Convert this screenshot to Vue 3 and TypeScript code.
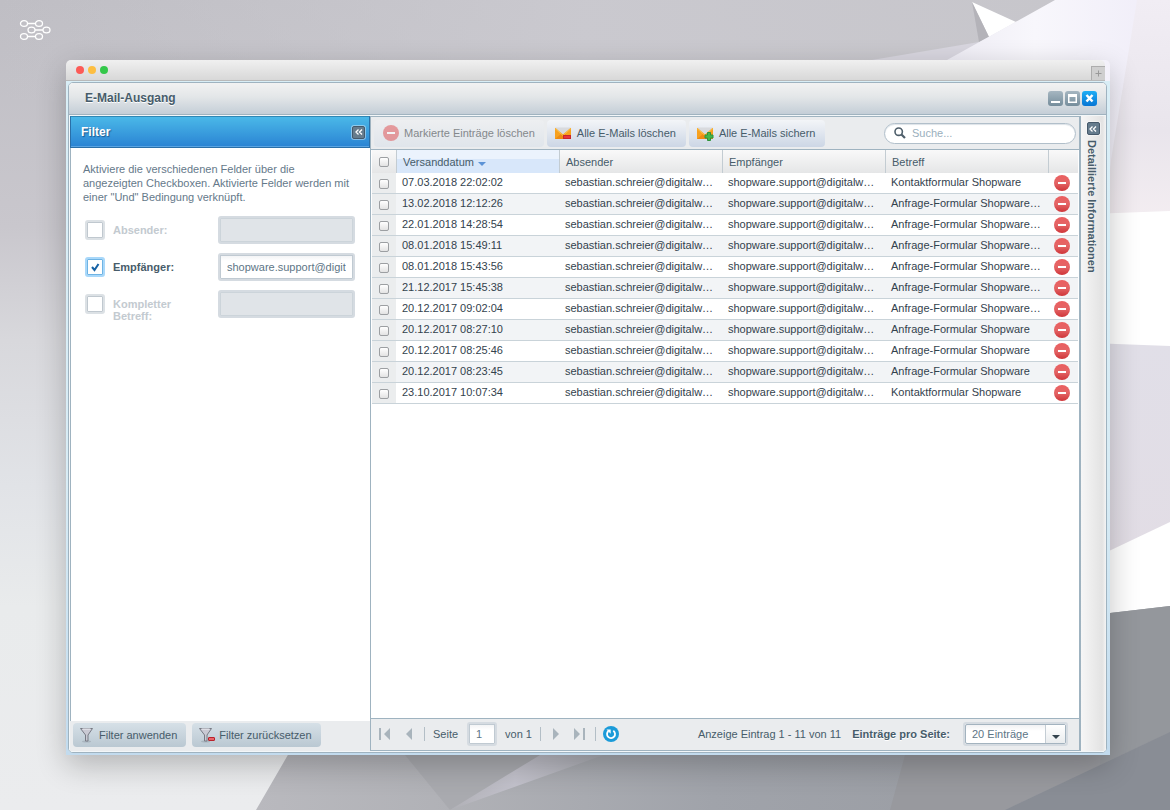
<script setup lang="ts">
import { computed, ref } from 'vue'

interface Mail {
  date: string
  subject: string
  selected: boolean
}

interface FilterField {
  id: string
  label: string
  active: boolean
  value: string
}

const sender = 'sebastian.schreier@digitalw…'
const recipient = 'shopware.support@digitalw…'

const mails = ref<Mail[]>([
  { date: '07.03.2018 22:02:02', subject: 'Kontaktformular Shopware', selected: false },
  { date: '13.02.2018 12:12:26', subject: 'Anfrage-Formular Shopware…', selected: false },
  { date: '22.01.2018 14:28:54', subject: 'Anfrage-Formular Shopware…', selected: false },
  { date: '08.01.2018 15:49:11', subject: 'Anfrage-Formular Shopware…', selected: false },
  { date: '08.01.2018 15:43:56', subject: 'Anfrage-Formular Shopware…', selected: false },
  { date: '21.12.2017 15:45:38', subject: 'Anfrage-Formular Shopware…', selected: false },
  { date: '20.12.2017 09:02:04', subject: 'Anfrage-Formular Shopware…', selected: false },
  { date: '20.12.2017 08:27:10', subject: 'Anfrage-Formular Shopware', selected: false },
  { date: '20.12.2017 08:25:46', subject: 'Anfrage-Formular Shopware', selected: false },
  { date: '20.12.2017 08:23:45', subject: 'Anfrage-Formular Shopware', selected: false },
  { date: '23.10.2017 10:07:34', subject: 'Kontaktformular Shopware', selected: false },
])

const filters = ref<FilterField[]>([
  { id: 'absender', label: 'Absender:', active: false, value: '' },
  { id: 'empfaenger', label: 'Empfänger:', active: true, value: 'shopware.support@digit' },
  { id: 'betreff', label: 'Kompletter Betreff:', active: false, value: '' },
])

const search = ref('')
const page = ref('1')
const perPage = ref('20')
const noneSelected = computed(() => !mails.value.some((m) => m.selected))
const allSelected = computed({
  get: () => mails.value.length > 0 && mails.value.every((m) => m.selected),
  set: (on: boolean) => mails.value.forEach((m) => (m.selected = on)),
})

function removeMail(index: number) {
  mails.value.splice(index, 1)
}

function resetFilters() {
  filters.value.forEach((f) => {
    f.active = false
    f.value = ''
  })
}
</script>

<template>
  <div class="desktop">
    <svg class="wallpaper" viewBox="0 0 1170 810" preserveAspectRatio="xMidYMid slice" aria-hidden="true">
      <defs>
        <linearGradient id="wp-base" x1="0" y1="0" x2="0" y2="1">
          <stop offset="0" stop-color="#bfbec4" />
          <stop offset="0.28" stop-color="#c9c7cd" />
          <stop offset="0.42" stop-color="#d8d8dc" />
          <stop offset="0.6" stop-color="#e1e3e7" />
          <stop offset="0.75" stop-color="#e9ebec" />
          <stop offset="1" stop-color="#ebecee" />
        </linearGradient>
        <linearGradient id="wp-glow" x1="0" y1="0" x2="1" y2="0">
          <stop offset="0" stop-color="#cbcad0" stop-opacity="0" />
          <stop offset="0.5" stop-color="#cbcad0" stop-opacity="0.9" />
          <stop offset="1" stop-color="#c7c6cb" stop-opacity="0.9" />
        </linearGradient>
        <linearGradient id="wp-sheet" x1="0" y1="0" x2="1" y2="0">
          <stop offset="0" stop-color="#e9e7f1" />
          <stop offset="0.5" stop-color="#f8f7fc" />
          <stop offset="1" stop-color="#efecf8" />
        </linearGradient>
        <linearGradient id="wp-fold" x1="0" y1="0" x2="0" y2="1">
          <stop offset="0" stop-color="#f1edf4" />
          <stop offset="0.6" stop-color="#e9e5ec" />
          <stop offset="1" stop-color="#f3edf1" />
        </linearGradient>
        <linearGradient id="wp-lilac" x1="0" y1="0" x2="0" y2="1">
          <stop offset="0" stop-color="#e1dfe8" />
          <stop offset="1" stop-color="#e2dde5" />
        </linearGradient>
        <linearGradient id="wp-floor" x1="0" y1="0" x2="1" y2="0">
          <stop offset="0" stop-color="#b9b9be" />
          <stop offset="0.22" stop-color="#b0b1b6" />
          <stop offset="0.5" stop-color="#a0a3aa" />
          <stop offset="1" stop-color="#979aa0" />
        </linearGradient>
        <linearGradient id="wp-streak" x1="0" y1="0" x2="1" y2="0">
          <stop offset="0" stop-color="#b0b0b6" />
          <stop offset="0.4" stop-color="#c3c2cc" />
          <stop offset="1" stop-color="#a8aab0" />
        </linearGradient>
      </defs>
      <rect width="1170" height="810" fill="url(#wp-base)" />
      <rect width="1170" height="100" fill="url(#wp-glow)" />
      <polygon points="860,62 979,42 1016,22 1040,90 860,90" fill="#d8d6df" />
      <polygon points="972,2 1016,22 989,37" fill="#fff" />
      <polygon points="972,2 989,37 979,42" fill="#b4b3b9" />
      <polygon points="1055,0 1170,0 1170,230 900,230 900,86 947,60" fill="url(#wp-sheet)" />
      <polygon points="1137,0 1170,0 1170,211 1105,218 1111,160" fill="url(#wp-fold)" />
      <polygon points="1090,214 1170,211 1170,620 1090,620" fill="#fff" />
      <polygon points="1090,343 1170,346 1170,522 1090,560" fill="url(#wp-lilac)" />
      <polygon points="340,665 1110,613 1170,606 1170,810 256,810" fill="url(#wp-floor)" />
      <polygon points="405,755 450,810 545,755 545,700 400,700" fill="#a9aaaf" />
      <polygon points="450,810 545,752 612,752" fill="url(#wp-streak)" />
      <polygon points="905,755 890,810 1005,810 1170,732 1170,690 905,690" fill="#98999e" />
      <polygon points="1110,613 1170,606 1170,732 1100,765" fill="#94979c" />
      <polygon points="1005,810 1170,732 1170,810" fill="#898d95" />
    </svg>

    <a class="logo" href="#" aria-label="Startseite">
      <svg width="32" height="22" viewBox="0 0 32 22" fill="none" stroke="#fff" stroke-width="1.300">
        <ellipse cx="5" cy="4.500" rx="3.500" ry="2.900" />
        <ellipse cx="20" cy="4.500" rx="3.500" ry="2.900" />
        <ellipse cx="12.500" cy="11" rx="3.500" ry="2.900" />
        <ellipse cx="27.500" cy="11" rx="3.500" ry="2.900" />
        <ellipse cx="5" cy="17.500" rx="3.500" ry="2.900" />
        <ellipse cx="20" cy="17.500" rx="3.500" ry="2.900" />
        <path d="M8.500 4.500h8M16 11h8M8.500 17.500h8" />
      </svg>
    </a>

    <div class="browser">
      <header class="tabbar">
        <i class="dot red"></i><i class="dot amber"></i><i class="dot green"></i>
        <button class="newtab" type="button" aria-label="Neuer Tab">
          <svg width="7" height="7" viewBox="0 0 7 7"><path d="M3.500 0.500v6M0.500 3.500h6" stroke="#999" /></svg>
        </button>
      </header>

      <div class="frame">
        <section class="window">
          <div class="titlebar">
            <h1>E-Mail-Ausgang</h1>
            <button class="ctl" type="button" aria-label="Minimieren">
              <svg viewBox="0 0 15 15"><path d="M3 10h9v2H3z" fill="#fff" /></svg>
            </button>
            <button class="ctl" type="button" aria-label="Maximieren">
              <svg viewBox="0 0 15 15"><path d="M3 3h9v9H3zM4.500 6v4.500h6V6z" fill="#fff" fill-rule="evenodd" /></svg>
            </button>
            <button class="ctl close" type="button" aria-label="Schließen">
              <svg viewBox="0 0 15 15"><path d="M4.500 4l6 6.500M10.500 4l-6 6.500" stroke="#fff" stroke-width="2.500" /></svg>
            </button>
          </div>

          <div class="body">
            <aside class="filter">
              <div class="filter-head">
                <h2>Filter</h2>
                <button class="collapse" type="button" aria-label="Filter einklappen">
                  <svg width="8" height="6" viewBox="0 0 8 6"><path d="M3.500 0.500L1 3l2.500 2.500M7 0.500L4.500 3 7 5.500" /></svg>
                </button>
              </div>
              <div class="filter-body">
                <p>Aktiviere die verschiedenen Felder über die angezeigten Checkboxen. Aktivierte Felder werden mit einer "Und" Bedingung verknüpft.</p>
                <div v-for="f in filters" :key="f.id" class="field" :class="{ off: !f.active }">
                  <input :id="'on-' + f.id" v-model="f.active" class="bigcheck" type="checkbox" />
                  <label :for="'on-' + f.id">{{ f.label }}</label>
                  <input v-model="f.value" class="text" type="text" :aria-label="f.label" :disabled="!f.active" />
                </div>
              </div>
              <div class="filter-foot">
                <button class="btn" type="button">
                  <svg width="14" height="16" viewBox="0 0 14 16">
                    <ellipse cx="6.500" cy="14.500" rx="4.500" ry="1" fill="#a9b5bf" />
                    <path d="M0.500 1.500h12L8 8v6H5.500V8z" fill="#c9c9d3" stroke="#777a84" />
                    <path d="M2.500 2h8" stroke="#f1f1f6" />
                  </svg>
                  Filter anwenden
                </button>
                <button class="btn" type="button" @click="resetFilters">
                  <svg width="16" height="16" viewBox="0 0 16 16">
                    <ellipse cx="6.500" cy="14.500" rx="4.500" ry="1" fill="#a9b5bf" />
                    <path d="M0.500 1.500h12L8 8v6H5.500V8z" fill="#c9c9d3" stroke="#777a84" />
                    <path d="M2.500 2h8" stroke="#f1f1f6" />
                    <rect x="9.500" y="10.500" width="6" height="3" rx="0.500" fill="#e8656a" stroke="#b8222c" />
                  </svg>
                  Filter zurücksetzen
                </button>
              </div>
            </aside>

            <main class="grid">
              <div class="toolbar">
                <button class="tool" type="button" :disabled="noneSelected">
                  <svg class="minus" viewBox="0 0 16 16"><circle cx="8" cy="8" r="8" fill="#e0494b" /><path d="M4 7h8v2H4z" fill="#fff" /></svg>
                  Markierte Einträge löschen
                </button>
                <button class="tool" type="button">
                  <svg width="17" height="16" viewBox="0 0 17 16">
                    <path d="M0 3h16v11H0z" fill="#f7a11f" />
                    <path d="M0 14l6-5h4l6 5z" fill="#ee8a12" />
                    <path d="M0 2.500h16L8 9.500z" fill="#d8dade" />
                    <path d="M0 3.500l8 7 8-7" fill="none" stroke="#fbbf45" />
                    <rect x="8.500" y="10.500" width="7" height="3" fill="#e8343a" stroke="#c9262c" />
                  </svg>
                  Alle E-Mails löschen
                </button>
                <button class="tool" type="button">
                  <svg width="17" height="16" viewBox="0 0 17 16">
                    <path d="M0 3h16v11H0z" fill="#f7a11f" />
                    <path d="M0 14l6-5h4l6 5z" fill="#ee8a12" />
                    <path d="M0 2.500h16L8 9.500z" fill="#d8dade" />
                    <path d="M0 3.500l8 7 8-7" fill="none" stroke="#fbbf45" />
                    <path d="M10.500 7.500h3v2.500h2.500v3h-2.500v2.500h-3V13H8v-3h2.500z" fill="#45b649" stroke="#2f9238" />
                  </svg>
                  Alle E-Mails sichern
                </button>
                <label class="search">
                  <svg width="12" height="12" viewBox="0 0 12 12" fill="none" stroke="#4f5f6b">
                    <circle cx="4.700" cy="4.700" r="3.700" stroke-width="1.600" />
                    <path d="M7.500 7.500l3.500 3.500" stroke-width="2.200" />
                  </svg>
                  <input v-model="search" type="text" placeholder="Suche..." aria-label="Suche" />
                </label>
              </div>

              <div class="table-area">
                <table>
                  <colgroup>
                    <col class="c-check" /><col /><col /><col /><col /><col class="c-act" />
                  </colgroup>
                  <thead>
                    <tr>
                      <th class="first"><input v-model="allSelected" class="check" type="checkbox" aria-label="Alle auswählen" /></th>
                      <th class="sorted">Versanddatum <i class="caret"></i></th>
                      <th>Absender</th>
                      <th>Empfänger</th>
                      <th>Betreff</th>
                      <th></th>
                    </tr>
                  </thead>
                  <tbody>
                    <tr v-for="(m, i) in mails" :key="m.date">
                      <td class="first"><input v-model="m.selected" class="check" type="checkbox" :aria-label="m.date" /></td>
                      <td>{{ m.date }}</td>
                      <td>{{ sender }}</td>
                      <td>{{ recipient }}</td>
                      <td>{{ m.subject }}</td>
                      <td class="act">
                        <button type="button" aria-label="Löschen" @click="removeMail(i)">
                          <svg class="minus" viewBox="0 0 16 16">
                            <defs>
                              <linearGradient :id="'del-' + i" x1="0" y1="0" x2="0" y2="1">
                                <stop offset="0" stop-color="#ea5f60" /><stop offset="0.500" stop-color="#e46566" /><stop offset="1" stop-color="#cf3539" />
                              </linearGradient>
                            </defs>
                            <circle cx="8" cy="8" r="8" :fill="`url(#del-${i})`" />
                            <path d="M4 7h8v2H4z" fill="#fff" />
                          </svg>
                        </button>
                      </td>
                    </tr>
                  </tbody>
                </table>
              </div>

              <footer class="pager">
                <button class="nav" type="button" aria-label="Erste Seite" disabled>
                  <svg width="12" height="12" viewBox="0 0 12 12"><path d="M0 0h2v12H0zM11 0v12L5 6z" /></svg>
                </button>
                <button class="nav prev" type="button" aria-label="Vorherige Seite" disabled>
                  <svg width="6" height="12" viewBox="0 0 6 12"><path d="M6 0v12L0 6z" /></svg>
                </button>
                <i class="sep"></i>
                <label for="page-no">Seite</label>
                <input id="page-no" v-model="page" class="text pageno" type="text" />
                <span>von 1</span>
                <i class="sep after"></i>
                <button class="nav next" type="button" aria-label="Nächste Seite" disabled>
                  <svg width="6" height="12" viewBox="0 0 6 12"><path d="M0 0v12l6-6z" /></svg>
                </button>
                <button class="nav" type="button" aria-label="Letzte Seite" disabled>
                  <svg width="12" height="12" viewBox="0 0 12 12"><path d="M9 0h2v12H9zM0 0v12l6-6z" /></svg>
                </button>
                <i class="sep late"></i>
                <button class="reload" type="button" aria-label="Aktualisieren">
                  <svg width="16" height="16" viewBox="0 0 16 16">
                    <circle cx="8" cy="8" r="8" fill="#1b9bd9" />
                    <path d="M10.300 4.800A4 4 0 1 1 5.500 5" fill="none" stroke="#fff" stroke-width="1.800" />
                    <path d="M3.500 3.500h4.200v4.200z" fill="#fff" />
                  </svg>
                </button>
                <span class="info">Anzeige Eintrag 1 - 11 von 11</span>
                <label class="strong" for="per-page">Einträge pro Seite:</label>
                <span class="combo">
                  <select id="per-page" v-model="perPage">
                    <option value="20">20 Einträge</option>
                  </select>
                  <span class="trigger"><i></i></span>
                </span>
              </footer>
            </main>

            <aside class="side">
              <button class="collapse" type="button" aria-label="Details ausklappen">
                <svg width="8" height="6" viewBox="0 0 8 6"><path d="M3.500 0.500L1 3l2.500 2.500M7 0.500L4.500 3 7 5.500" /></svg>
              </button>
              <h2>Detaillierte Informationen</h2>
            </aside>
          </div>
        </section>
      </div>
    </div>
  </div>
</template>

<style>
body {
  margin: 0;
}
</style>

<style scoped>
.desktop,
.desktop *,
.desktop *::before,
.desktop *::after {
  box-sizing: border-box;
}
.desktop {
  position: relative;
  display: flex;
  min-height: 100vh;
  padding: 60px 60px 55px 66px;
  font: 11px/14px "Liberation Sans", Arial, sans-serif;
  color: #475c6a;
}
.wallpaper {
  position: fixed;
  inset: 0;
  width: 100%;
  height: 100%;
}
.logo {
  position: absolute;
  left: 19px;
  top: 19px;
}
.logo svg,
button svg {
  display: block;
}
button,
input,
select {
  margin: 0;
  font: inherit;
  color: inherit;
}
button {
  padding: 0;
  border: 0;
  background: none;
}
h1,
h2,
p {
  margin: 0;
  font-size: 12px;
}
.browser {
  position: relative;
  flex: 1;
  min-width: 0;
  display: flex;
  flex-direction: column;
  border-radius: 5px 5px 0 0;
  box-shadow: 0 10px 30px rgba(0, 0, 0, 0.24);
}

/* browser tab strip */
.tabbar {
  display: flex;
  align-items: center;
  gap: 4px;
  height: 21px;
  margin-right: 5px;
  padding-left: 10px;
  border-radius: 5px 5px 0 0;
  border-bottom: 1px solid #b9b9b9;
  background: linear-gradient(#f0f0f0, #d8d8d8);
}
.dot {
  width: 8px;
  height: 8px;
  border-radius: 50%;
}
.red {
  background: #fc5b57;
}
.amber {
  background: #fdbe41;
}
.green {
  background: #34c84a;
}
.newtab {
  display: grid;
  place-items: center;
  align-self: flex-end;
  width: 14px;
  height: 14px;
  margin-left: auto;
  border: 1px solid #adadad;
  border-width: 1px 0 0 1px;
  background: #cfcfcf;
}

/* application window */
.frame {
  flex: 1;
  display: flex;
  padding: 1px 3px 2px 2px;
  background: linear-gradient(#d9eef6 0%, #d8ecf5 60%, #c2dbee 100%);
}
.window {
  flex: 1;
  min-width: 0;
  display: flex;
  flex-direction: column;
  border: 1px solid #9fb3c0;
  border-radius: 5px;
  overflow: hidden;
  background: #fff;
}
.titlebar {
  display: flex;
  align-items: center;
  gap: 2px;
  height: 32px;
  padding: 0 9px 0 16px;
  border-bottom: 1px solid #a0b3bf;
  background: linear-gradient(#f2f2f2, #e3e6e8 45%, #c4ced7);
}
.titlebar h1 {
  flex: 1;
  padding-bottom: 2px;
  text-shadow: 0 1px 0 #fff;
}
.ctl {
  width: 15px;
  height: 15px;
  border-radius: 3px;
  background: linear-gradient(#a6b6c1, #758d9b);
}
.close {
  background: linear-gradient(#1eaef5, #0876d4);
}
.body {
  flex: 1;
  display: grid;
  grid-template-columns: 300px minmax(0, 1fr) 27px;
  padding: 1px 0 1px 1px;
  background: #f3f7f9;
}

/* filter panel */
.filter {
  display: flex;
  flex-direction: column;
}
.filter-head {
  display: flex;
  align-items: center;
  height: 32px;
  padding: 0 4px 0 10px;
  border: 1px solid #2a6fa8;
  border-top-color: #2f87b5;
  background: linear-gradient(#4ab8e8, #2a83d3);
  box-shadow: inset 0 -1px 0 #5aa4e2;
}
.filter-head h2 {
  flex: 1;
  color: #fff;
  text-shadow: 1px 1px 1px #1c5c93;
}
.collapse {
  display: grid;
  place-items: center;
  width: 13px;
  height: 13px;
  border: 1px solid #46596a;
  border-radius: 2px;
  background: #667c8d;
  box-shadow: 0 0 0 1px rgba(255, 255, 255, 0.4);
}
.collapse path {
  fill: none;
  stroke: #fff;
  stroke-width: 1.3;
}
.filter-body {
  flex: 1;
  padding: 14px 15px 0 12px;
  border-left: 1px solid #9fb3c0;
  background: #fff;
}
.filter-body p {
  margin-bottom: 12px;
  font-size: 11px;
  color: #65798a;
}
.field {
  display: flex;
  align-items: flex-start;
  height: 37px;
  padding-left: 2px;
}
.field label {
  flex: none;
  width: 113px;
  padding: 8px 40px 0 8px;
  font-weight: bold;
  line-height: 12px;
}
.field.off label {
  color: #c3cad0;
}
.bigcheck {
  appearance: none;
  flex: none;
  width: 20px;
  height: 20px;
  margin-top: 4px;
  border: 2px solid #dce1e5;
  border-radius: 3px;
  background: #fff;
  box-shadow: inset 0 0 0 1px #c0c8cf;
}
.bigcheck:checked {
  border-color: #a9d8fa;
  box-shadow: inset 0 0 0 1px #6fb4e4;
  background: #fff url("data:image/svg+xml,%3Csvg xmlns='http://www.w3.org/2000/svg' viewBox='0 0 16 16'%3E%3Cpath d='M5 8l2.500 3 4-6' fill='none' stroke='%231562a5' stroke-width='2'/%3E%3C/svg%3E") center / 16px no-repeat;
}
.text {
  flex: 1;
  min-width: 0;
  height: 28px;
  padding: 0 7px;
  border: 2px solid #d5dbe1;
  border-radius: 3px;
  background: linear-gradient(#f1f2f4, #fff 6px);
  box-shadow: inset 0 0 0 1px #c0cad2, inset 0 1px 0 #8fa1af;
  color: #5d7586;
}
.text:disabled {
  background: #e0e4e8;
  box-shadow: inset 0 0 0 1px #ccd4da;
}
.filter-foot {
  display: flex;
  gap: 6px;
  padding: 2px 3px 4px;
  background: #eaecee;
}
.btn {
  display: flex;
  align-items: center;
  gap: 4px;
  height: 24px;
  padding: 0 9px 0 7px;
  border-radius: 4px;
  background: linear-gradient(#d6e0e7, #bac8d2);
  white-space: nowrap;
}
.btn:first-child {
  gap: 5px;
}

/* mail list */
.grid {
  display: flex;
  flex-direction: column;
  border: solid #9fb3c0;
  border-width: 1px 0 1px 1px;
  background: #fff;
}
.toolbar {
  display: flex;
  align-items: center;
  gap: 3px;
  height: 33px;
  padding: 0 3px;
  border-bottom: 1px solid #9fb3c0;
  background: #eaecee;
}
.tool {
  display: flex;
  align-items: center;
  gap: 5px;
  height: 27px;
  padding: 0 10px 0 8px;
  border-radius: 4px;
  background: linear-gradient(#f3f5f8, #ccd6e5);
  white-space: nowrap;
}
.tool:disabled {
  padding: 0 9px;
  color: #84888c;
  background: linear-gradient(#edeff1, #e0e5eb);
}
.tool:disabled svg {
  opacity: 0.5;
}
.minus {
  width: 16px;
  height: 16px;
}
.search {
  display: flex;
  align-items: center;
  gap: 6px;
  width: 192px;
  height: 21px;
  margin-left: auto;
  padding: 0 9px;
  border: 1px solid #b1bfca;
  border-radius: 11px;
  background: #fff;
  box-shadow: inset 0 1px 1px #dde3e8;
}
.search input {
  flex: 1;
  min-width: 0;
  padding: 0;
  border: 0;
  outline: 0;
  background: none;
}
.search input::placeholder {
  color: #9aafbd;
}
.table-area {
  flex: 1;
  padding: 0 1px;
}
table {
  width: 100%;
  table-layout: fixed;
  border-collapse: separate;
  border-spacing: 0;
}
.c-check {
  width: 24px;
}
.c-act {
  width: 30px;
}
th,
td {
  padding: 0 6px;
  overflow: hidden;
  text-align: left;
  text-overflow: ellipsis;
  white-space: nowrap;
  font-weight: normal;
}
th {
  height: 23px;
  border-left: 1px solid #c3ccd2;
  background: linear-gradient(#f9f9f9, #e5e6e7);
}
th.sorted {
  background: linear-gradient(#ebf3fd 40%, #d8e7fa 40%);
}
td {
  height: 21px;
  padding-bottom: 2px;
  border-bottom: 1px solid #c9d3d9;
  color: #33424d;
}
tbody tr:nth-child(even) td {
  background: #f2f4f6;
}
th.first,
td.first {
  padding: 1px 0 0 7px;
  border-left: 0;
}
tbody td.first,
tbody tr:nth-child(even) td.first {
  background: #ebedee;
}
.check {
  appearance: none;
  display: block;
  width: 10px;
  height: 10px;
  border: 1px solid #9c9fa2;
  border-radius: 2px;
  background: linear-gradient(#fff, #e3e3e3);
}
.check:checked {
  background: #4d7fae;
}
.caret {
  display: inline-block;
  margin-left: 1px;
  border: solid transparent;
  border-width: 4px 4px 0;
  border-top-color: #5c93d6;
}
td.act {
  padding: 0 0 0 6px;
}
.act button {
  display: block;
}

/* paging bar */
.pager {
  display: flex;
  align-items: center;
  height: 32px;
  padding: 0 11px 2px 8px;
  border-top: 1px solid #9fb3c0;
  background: #eaecee;
  white-space: nowrap;
}
.nav path {
  fill: #a9b4bc;
}
.prev {
  margin: 0 12px 0 15px;
}
.sep {
  width: 1px;
  height: 14px;
  margin-right: 8px;
  background: #b3bec6;
}
.after {
  margin: 0 12px 0 8px;
}
.late {
  margin: 0 7px 0 9px;
}
.next {
  margin-right: 15px;
}
.pageno {
  flex: none;
  width: 30px;
  height: 24px;
  margin: 0 8px 0 9px;
}
.info {
  margin-left: auto;
}
.strong {
  margin: 0 13px 0 11px;
  font-weight: bold;
  text-shadow: 0 1px 0 #fff;
}
.combo {
  position: relative;
  width: 105px;
  height: 24px;
  border: 2px solid #d5dbe1;
  border-radius: 3px;
  color: #5d7586;
}
.combo select {
  appearance: none;
  display: block;
  width: 100%;
  height: 20px;
  padding: 0 26px 0 6px;
  border: 1px solid #a3b3bf;
  border-radius: 2px;
  background: linear-gradient(#f1f2f4, #fff 6px);
}
.trigger {
  position: absolute;
  top: 1px;
  right: 1px;
  display: grid;
  place-items: center;
  width: 20px;
  height: 18px;
  border-left: 1px solid #c4cdd4;
  background: linear-gradient(#fff, #e9ecee);
  pointer-events: none;
}
.trigger i {
  margin-top: 6px;
  border: solid transparent;
  border-width: 4px 4px 0;
  border-top-color: #33424d;
}

/* collapsed detail panel */
.side {
  display: flex;
  flex-direction: column;
  align-items: center;
  gap: 5px;
  padding: 6px 1px 0 0;
  border-left: 2px solid #9fb3c0;
  background: linear-gradient(90deg, #f6f6f6, #e3e3e3 85%, #f4f4f4);
}
.side h2 {
  padding-right: 2px;
  writing-mode: vertical-rl;
  font-size: 11px;
  line-height: 14px;
}
</style>
